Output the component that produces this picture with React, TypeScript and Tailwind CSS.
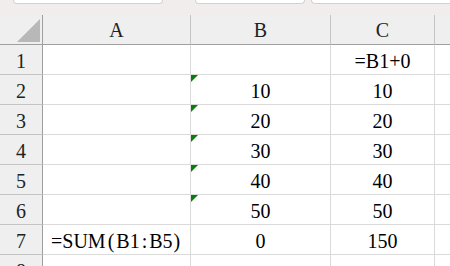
import React from "react";

const cols = ["A", "B", "C"];
const data: [React.ReactNode, string, string][] = [
  ["", "", "=B1+0"],
  ["", "10", "10"],
  ["", "20", "20"],
  ["", "30", "30"],
  ["", "40", "40"],
  ["", "50", "50"],
  [
    <>
      =SUM<span className="mx-[2px]">(</span>B1<span className="mx-[2px]">:</span>B5
      <span className="ml-[1px]">)</span>
    </>,
    "0",
    "150",
  ],
  ["", "", ""],
];

function GreenTri() {
  return (
    <svg className="absolute left-0 top-0" width="7" height="7" viewBox="0 0 7 7">
      <polygon points="0,0 7,0 0,7" fill="#0a7d0a" />
    </svg>
  );
}

export default function App() {
  return (
    <div
      className="w-[450px] h-[266px] overflow-hidden bg-white text-black"
      style={{ fontFamily: '"Liberation Serif", "Times New Roman", serif' }}
    >
      {/* tab strip */}
      <div className="h-[15px] bg-[#f2eded] flex items-start">
        <div className="ml-[13px] w-[150px] h-[4px] bg-white border border-t-0 border-[#d6d0d0] rounded-b-[6px]" />
        <div className="ml-[32px] w-[110px] h-[4px] bg-white border border-t-0 border-[#d6d0d0] rounded-b-[6px]" />
        <div className="ml-[6px] flex-1 h-[4px] bg-white border border-t-0 border-r-0 border-[#d6d0d0] rounded-bl-[6px]" />
      </div>
      <div className="grid grid-cols-[43px_148px_140px_104px_1fr] auto-rows-[30px] text-[20px] leading-none">
        {/* header row */}
        <div className="relative bg-[#efefef] border-r border-b border-[#9f9f9f]">
          <svg className="absolute left-[17px] top-[4px]" width="23" height="23" viewBox="0 0 23 23">
            <polygon points="0,23 23,0 23,23" fill="#b8b8b8" />
          </svg>
        </div>
        {cols.map((c) => (
          <div
            key={c}
            className="bg-[#efefef] border-r border-r-[#c4c4c4] border-b border-b-[#9f9f9f] flex items-center justify-center pt-[1px] text-[#222]"
          >
            {c}
          </div>
        ))}
        <div className="bg-[#efefef] border-b border-[#9f9f9f]" />
        {data.map((row, i) => (
          <React.Fragment key={i}>
            <div className="bg-[#efefef] border-r border-r-[#9f9f9f] border-b border-b-[#c4c4c4] flex items-end justify-center pb-[3px] text-[#222]">
              {i + 1}
            </div>
            <div className="border-r border-b border-[#dadada] flex items-end pl-[8px] pb-[3px] whitespace-nowrap">
              {row[0]}
            </div>
            <div className="relative border-r border-b border-[#dadada] flex items-end justify-center pb-[3px]">
              {i >= 1 && i <= 5 && <GreenTri />}
              {row[1]}
            </div>
            <div className="border-r border-b border-[#dadada] flex items-end justify-center pb-[3px]">
              {row[2]}
            </div>
            <div className="border-b border-[#dadada]" />
          </React.Fragment>
        ))}
      </div>
    </div>
  );
}
